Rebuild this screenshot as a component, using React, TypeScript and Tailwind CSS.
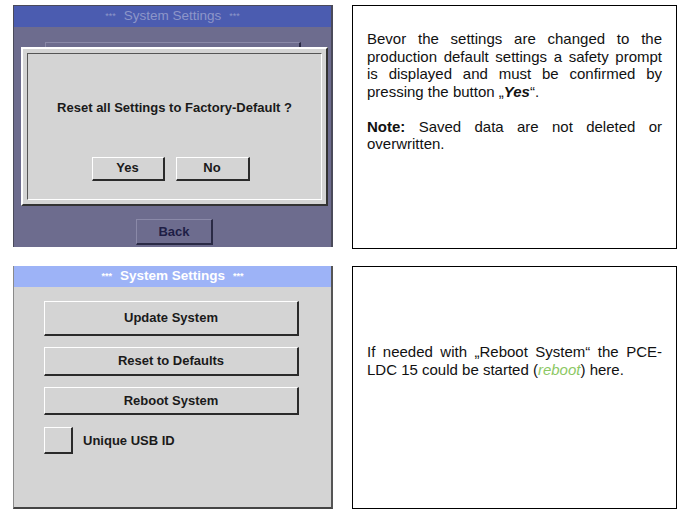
const font = { fontFamily: '"Liberation Sans", Arial, sans-serif' }

function RaisedButton({ label, className }: { label: string; className: string }) {
  return (
    <div
      className={`flex items-center justify-center border-t border-l border-t-white border-l-white border-b-2 border-r-2 border-b-[#2a2a2a] border-r-[#2a2a2a] bg-[#d4d4d4] text-[13px] font-bold text-[#1a1a1a] ${className}`}
    >
      {label}
    </div>
  )
}

function Line({ children, last }: { children: React.ReactNode; last?: boolean }) {
  return (
    <span className={`block whitespace-nowrap ${last ? '' : 'text-justify [text-align-last:justify]'}`}>
      {children}
    </span>
  )
}

function ResetDialogScreen() {
  return (
    <div className="relative flex h-[242px] w-[320px] flex-col border border-[#4a4a5a] border-r-2 border-b-0 bg-[#6d6c8e]">
      <div className="flex h-[21px] items-center justify-center bg-[#4b5cb0] text-[13.5px] text-[#8d96c9]">
        <span className="text-[9px]">***</span>
        <span className="mx-[8px]">System Settings</span>
        <span className="text-[9px]">***</span>
      </div>

      {/* dimmed screen behind the prompt */}
      <div className="flex flex-1 flex-col items-center px-[33px] pt-[15px]">
        <div className="h-[34px] w-[256px] border-t border-l border-t-[#8a89a8] border-l-[#8a89a8] border-r-2 border-r-[#2a2a45]" />
        <div className="mt-auto mb-[2px] ml-[4px] flex h-[26px] w-[77px] items-center justify-center border-t border-l border-t-[#8a89a8] border-l-[#8a89a8] border-b-2 border-r-2 border-b-[#2a2a45] border-r-[#2a2a45] text-[13px] font-bold text-[#1e1e46]">
          Back
        </div>
      </div>

      {/* safety prompt */}
      <div className="absolute left-[7px] top-[41px] h-[159px] w-[307px] border-t-2 border-l-2 border-t-white border-l-white border-b-2 border-r-2 border-b-[#333] border-r-[#333] bg-[#d4d4d4] p-[4px]">
        <div className="flex h-full flex-col items-center border-t border-l border-t-[#555] border-l-[#555] border-b border-r border-b-white border-r-white">
          <div className="mt-[44px] text-[13px] font-bold text-[#1a1a1a]">Reset all Settings to Factory-Default ?</div>
          <div className="mt-[39px] mr-[8px] flex gap-[11px]">
            <RaisedButton label="Yes" className="h-[24px] w-[73px]" />
            <RaisedButton label="No" className="h-[24px] w-[74px]" />
          </div>
        </div>
      </div>
    </div>
  )
}

function SystemSettingsScreen() {
  return (
    <div className="flex h-[243px] w-[320px] flex-col border-l border-l-[#8a8a8a] border-r-2 border-r-[#555] border-b-2 border-b-[#444] bg-[#d4d4d4]">
      <div className="flex h-[21px] items-center justify-center bg-[#9db3f7] text-[13.5px] font-bold text-white">
        <span className="text-[9px]">***</span>
        <span className="mx-[8px]">System Settings</span>
        <span className="text-[9px]">***</span>
      </div>
      <div className="flex flex-col pl-[30px] pt-[14px]">
        <RaisedButton label="Update System" className="h-[35px] w-[255px]" />
        <RaisedButton label="Reset to Defaults" className="mt-[11px] h-[29px] w-[255px]" />
        <RaisedButton label="Reboot System" className="mt-[11px] h-[28px] w-[255px]" />
        <div className="mt-[12px] flex items-center">
          <div className="h-[27px] w-[29px] border-t border-l border-t-white border-l-white border-b-2 border-r-2 border-b-[#2a2a2a] border-r-[#2a2a2a]" />
          <span className="ml-[10px] text-[13px] font-bold text-[#1a1a1a]">Unique USB ID</span>
        </div>
      </div>
    </div>
  )
}

export default function App() {
  return (
    <div className="h-[519px] w-[691px] bg-white text-black" style={font}>
      <div className="flex flex-col gap-[17px] pl-[13px] pt-[5px]">
        <div className="flex items-start gap-[19px]">
          <ResetDialogScreen />
          <div className="h-[244px] w-[325px] border border-black px-[14px] pt-[24px] text-[15px] leading-[17.5px] text-[#111]">
            <p>
              <Line>Bevor the settings are changed to the</Line>
              <Line>production default settings a safety prompt</Line>
              <Line>is displayed and must be confirmed by</Line>
              <Line last>
                pressing the button „<b className="italic">Yes</b>“.
              </Line>
            </p>
            <p className="mt-[17.5px]">
              <Line>
                <b>Note:</b> Saved data are not deleted or
              </Line>
              <Line last>overwritten.</Line>
            </p>
          </div>
        </div>

        <div className="flex items-start gap-[19px]">
          <SystemSettingsScreen />
          <div className="h-[243px] w-[325px] border border-black px-[14px] pt-[76px] text-[15px] leading-[17.5px] text-[#111]">
            <p>
              <Line>If needed with „Reboot System“ the PCE-</Line>
              <Line last>
                LDC 15 could be started (<i className="text-[#8cc864]">reboot</i>) here.
              </Line>
            </p>
          </div>
        </div>
      </div>
    </div>
  )
}
